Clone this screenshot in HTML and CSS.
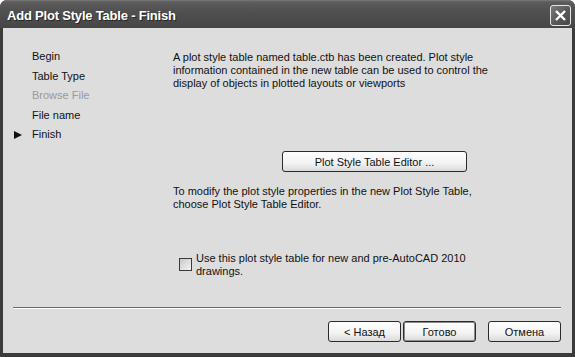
FILE: index.html
```html
<!DOCTYPE html>
<html>

<head>
    <title>Add Plot Style Table - Finish</title>
    <meta name="viewport" content="width=device-width, initial-scale=1.0">
    <link rel="stylesheet" href="styles.css">
</head>

<body>
    <div class="window">
        <div class="titlebar">
            <span class="title">Add Plot Style Table - Finish</span>
            <span class="close-btn">
                <svg xmlns="http://www.w3.org/2000/svg" viewBox="0 0 19 19">
                    <path d="M5 5l9 9M14 5l-9 9" />
                </svg>
            </span>
        </div>

        <div class="dialog-body">
            <div class="wizard">
                <ul class="steps">
                    <li>Begin</li>
                    <li>Table Type</li>
                    <li class="disabled">Browse File</li>
                    <li>File name</li>
                    <li class="current">Finish</li>
                </ul>

                <div class="pane">
                    <p class="info">A plot style table named table.ctb has been created. Plot style<br>
                        information contained in the new table can be used to control the<br>
                        display of objects in plotted layouts or viewports</p>

                    <button class="btn editor-btn">Plot Style Table Editor ...</button>

                    <p class="info hint">To modify the plot style properties in the new Plot Style Table,<br>
                        choose Plot Style Table Editor.</p>

                    <label class="check-row">
                        <span class="checkbox"></span>
                        <span>Use this plot style table for new and pre-AutoCAD 2010<br>drawings.</span>
                    </label>
                </div>
            </div>

            <div class="separator"></div>

            <div class="buttons">
                <button class="btn">&lt; Назад</button>
                <button class="btn default">Готово</button>
                <button class="btn cancel">Отмена</button>
            </div>
        </div>
    </div>
</body>

</html>
```

FILE: styles.css
```css
:root {
    --frame-color: #3b3b3b;
    --face-color: #dddddd;
    --text-color: #111111;
    --muted-color: #9a9a9a;
}

body {
    margin: 0;
    background: #ffffff;
    font-family: 'Liberation Sans', Arial, sans-serif;
    font-size: 11px;
    color: var(--text-color);
}

.window {
    width: 575px;
    height: 357px;
    box-sizing: border-box;
    background: var(--frame-color);
    border-radius: 7px 7px 0 0;
    display: flex;
    flex-direction: column;
    overflow: hidden;
}

/* -- Title bar -- */
.titlebar {
    height: 28px;
    flex: none;
    display: flex;
    align-items: center;
    justify-content: space-between;
    padding: 0 4px 0 7px;
    background: linear-gradient(#7a7a7a 0, #5c5c5c 2px, #505050 40%, #464646 100%);
}

.title {
    color: #ffffff;
    font-weight: bold;
    font-size: 13px;
    letter-spacing: -0.2px;
    text-shadow: 1px 1px 0 #262626;
    margin-top: 2px;
}

.close-btn {
    width: 19px;
    height: 19px;
    margin-top: 3px;
    border: 1px solid #e6e6e6;
    border-radius: 3px;
    background: linear-gradient(135deg, #7a7a7a, #555555 60%, #4a4a4a);
    display: flex;
}

.close-btn svg {
    width: 19px;
    height: 19px;
}

.close-btn path {
    stroke: #ffffff;
    stroke-width: 2.4;
    fill: none;
}

/* -- Dialog face -- */
.dialog-body {
    flex: 1;
    margin: 0 3px 4px;
    background: var(--face-color);
    display: flex;
    flex-direction: column;
}

.wizard {
    flex: 1;
    display: flex;
}

.steps {
    width: 170px;
    box-sizing: border-box;
    list-style: none;
    margin: 0;
    padding: 19px 0 0 29px;
}

.steps li {
    height: 19.5px;
    line-height: 19.5px;
    display: flex;
    align-items: center;
}

.steps li.disabled {
    color: var(--muted-color);
}

.steps li.current::before {
    content: "";
    border-left: 8px solid #111111;
    border-top: 4px solid transparent;
    border-bottom: 4px solid transparent;
    margin-left: -18px;
    margin-right: 10px;
}

.pane {
    flex: 1;
    padding-top: 23px;
}

.info {
    margin: 0;
    line-height: 13px;
}

.hint {
    margin-top: 13px;
}

.btn {
    font-family: inherit;
    font-size: 11px;
    color: var(--text-color);
    height: 21px;
    padding: 0;
    border: 1px solid #2a2a2a;
    border-radius: 3px;
    background: linear-gradient(#ffffff, #f2f2f2 60%, #dadada);
}

.editor-btn {
    display: block;
    width: 185px;
    margin: 61px 0 0 109px;
}

.check-row {
    display: flex;
    align-items: flex-start;
    gap: 4px;
    margin: 41px 0 0 6px;
    line-height: 13px;
}

.checkbox {
    width: 11px;
    height: 11px;
    margin-top: 6px;
    flex: none;
    border: 1px solid #3a3a3a;
    background: linear-gradient(135deg, #c8c8c8, #f4f4f4);
}

.separator {
    height: 1px;
    margin: 0 11px 0 10px;
    background: #6a6a6a;
    border-bottom: 1px solid #ffffff;
}

.buttons {
    display: flex;
    justify-content: flex-end;
    gap: 2px;
    padding: 12px 11px 11px 0;
}

.buttons .btn {
    width: 73px;
}

.buttons .default {
    box-shadow: inset 0 0 0 1px #8c8c8c;
}

.buttons .cancel {
    margin-left: 10px;
}
```
